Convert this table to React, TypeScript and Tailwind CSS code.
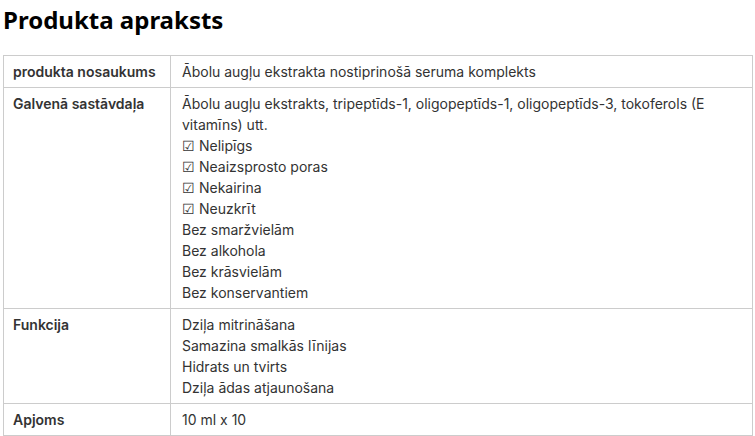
const rows: { label: string; lines: string[] }[] = [
  {
    label: 'produkta nosaukums',
    lines: ['Ābolu augļu ekstrakta nostiprinošā seruma komplekts'],
  },
  {
    label: 'Galvenā sastāvdaļa',
    lines: [
      'Ābolu augļu ekstrakts, tripeptīds-1, oligopeptīds-1, oligopeptīds-3, tokoferols (E vitamīns) utt.',
      '☑ Nelipīgs',
      '☑ Neaizsprosto poras',
      '☑ Nekairina',
      '☑ Neuzkrīt',
      'Bez smaržvielām',
      'Bez alkohola',
      'Bez krāsvielām',
      'Bez konservantiem',
    ],
  },
  {
    label: 'Funkcija',
    lines: ['Dziļa mitrināšana', 'Samazina smalkās līnijas', 'Hidrats un tvirts', 'Dziļa ādas atjaunošana'],
  },
  {
    label: 'Apjoms',
    lines: ['10 ml x 10'],
  },
];

export default function App() {
  return (
    <div className="w-[755px] h-[436px] overflow-hidden bg-white px-[3px] pt-[4px] text-[#333] font-['Inter','Noto_Sans',sans-serif]">
      <h2 className="text-[24px] leading-[32px] font-bold text-black font-['Noto_Sans',sans-serif]">
        Produkta apraksts
      </h2>
      <table className="mt-[19px] w-[750px] border-collapse text-[14px] leading-[21px]">
        <tbody>
          {rows.map((row, i) => (
            <tr key={i}>
              <td className="w-[167px] border border-[#ccc] px-[9px] py-[5px] align-top font-semibold">
                {row.label}
              </td>
              <td className="border border-[#ccc] pl-[11px] pr-[10px] py-[5px] align-top">
                {row.lines.map((line, j) => (
                  <div key={j}>{line}</div>
                ))}
              </td>
            </tr>
          ))}
        </tbody>
      </table>
    </div>
  );
}
